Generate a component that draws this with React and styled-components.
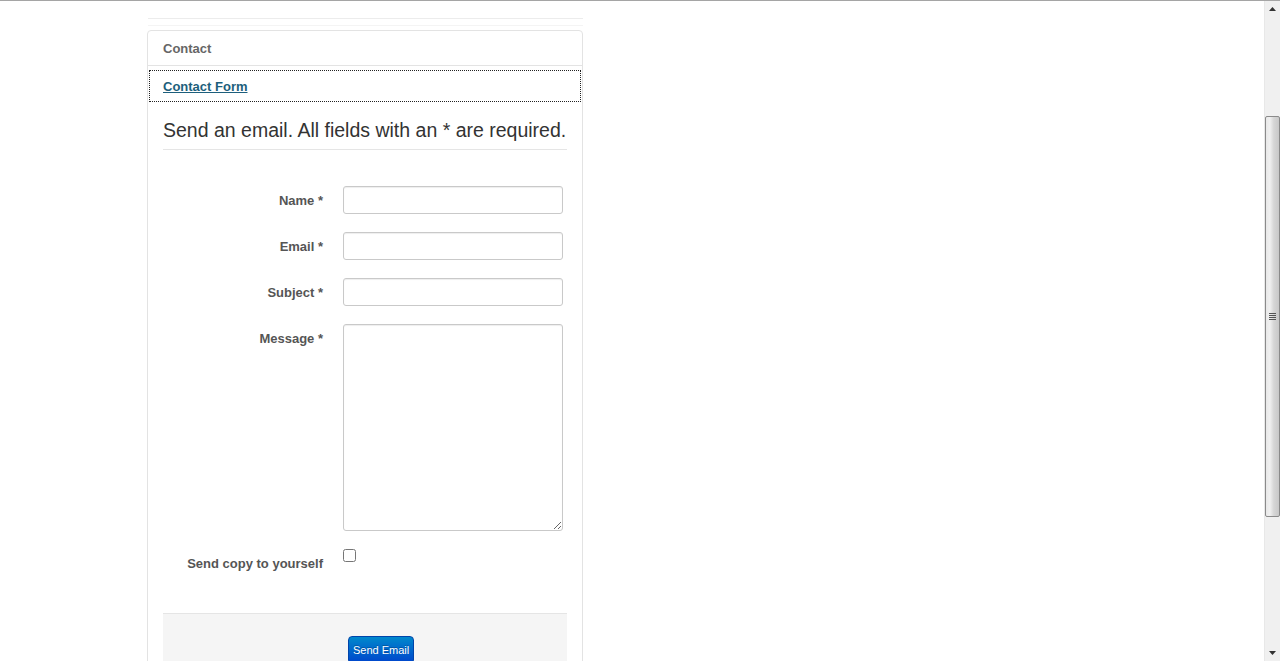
import React from 'react';
import styled, { createGlobalStyle } from 'styled-components';

const GlobalStyle = createGlobalStyle`
  html, body {
    margin: 0;
    padding: 0;
    background: #fff;
    font-family: 'Liberation Sans', Arial, sans-serif;
    overflow: hidden;
  }
`;

const Page = styled.div`
  display: flex;
  width: 1280px;
  height: 661px;
  border-top: 1px solid #a5a5a5;
  box-sizing: border-box;
  overflow: hidden;
`;

const Main = styled.div`
  flex: 1;
  padding-left: 147px;
`;

const Column = styled.div`
  width: 436px;
`;

const Rule = styled.div`
  margin-left: 1px;
  height: 6px;
  margin-top: 17px;
  border-top: 1px solid #ececec;
  border-bottom: 1px solid #f4f4f4;
`;

const Panel = styled.div`
  margin-top: 4px;
  border: 1px solid #e3e3e3;
  border-radius: 4px;
  height: 700px;
  box-sizing: border-box;
`;

const PanelHeader = styled.div`
  height: 34px;
  padding-left: 15px;
  line-height: 36px;
  font-size: 13px;
  font-weight: bold;
  color: #666;
  border-bottom: 1px solid #e3e3e3;
`;

const TabRow = styled.div`
  margin: 4px 1px 0;
  height: 30px;
  padding-left: 13px;
  border: 1px dotted #222;
  display: flex;
  align-items: center;
`;

const TabLink = styled.a`
  font-size: 13px;
  font-weight: bold;
  color: #1d5f7c;
  text-decoration: underline;
`;

const Body = styled.div`
  padding: 0 15px;
`;

const Legend = styled.h2`
  margin: 15px 0 0;
  padding-bottom: 6px;
  font-size: 19.5px;
  font-weight: normal;
  line-height: 26px;
  color: #333;
  border-bottom: 1px solid #e5e5e5;
  white-space: nowrap;
`;

const Fields = styled.div`
  padding-top: 36px;
  display: flex;
  flex-direction: column;
  gap: 18px;
`;

const Row = styled.div`
  display: flex;
  align-items: flex-start;
  gap: 20px;
`;

const Label = styled.label`
  width: 160px;
  text-align: right;
  font-size: 13px;
  font-weight: bold;
  color: #555;
  line-height: 16px;
  padding-top: ${p => p.$top || 7}px;
  white-space: nowrap;
`;

const Input = styled.input`
  width: 220px;
  height: 28px;
  box-sizing: border-box;
  border: 1px solid #c9c9c9;
  border-radius: 3px;
  box-shadow: inset 0 1px 1px rgba(0, 0, 0, 0.07);
  margin: 0;
  padding: 4px 6px;
`;

const TextArea = styled.textarea`
  width: 220px;
  height: 207px;
  box-sizing: border-box;
  border: 1px solid #c9c9c9;
  border-radius: 3px;
  box-shadow: inset 0 1px 1px rgba(0, 0, 0, 0.07);
  margin: 0;
  resize: both;
`;

const Check = styled.input`
  margin: 0;
  width: 13px;
  height: 13px;
`;

const Actions = styled.div`
  margin-top: 41px;
  height: 60px;
  background: #f5f5f5;
  border-top: 1px solid #e5e5e5;
  display: flex;
  justify-content: flex-start;
  padding: 22px 0 0 185px;
  box-sizing: border-box;
`;

const Button = styled.button`
  height: 28px;
  padding: 0 4px;
  font-family: 'Liberation Sans', Arial, sans-serif;
  font-size: 11px;
  color: #fff;
  background: linear-gradient(#0088cc, #0044cc);
  border: 1px solid #0044aa;
  border-radius: 4px;
  text-shadow: 0 -1px 0 rgba(0, 0, 0, 0.25);
`;

const Scrollbar = styled.div`
  width: 16px;
  background: #f0f0f0;
  border-left: 1px solid #e8e8e8;
  box-sizing: border-box;
  display: flex;
  flex-direction: column;
  align-items: center;
`;

const Arrow = styled.div`
  height: 16px;
  display: flex;
  align-items: center;
  justify-content: center;
`;

const Track = styled.div`
  flex: 1;
  width: 100%;
  padding-top: 99px;
  box-sizing: border-box;
`;

const Thumb = styled.div`
  height: 401px;
  border: 1px solid #8a8a8a;
  border-radius: 2px;
  background: linear-gradient(90deg, #e8e8e8 0%, #f0f0f0 30%, #d6d6d6 60%, #c8c8c8 100%);
  box-sizing: border-box;
  display: flex;
  align-items: center;
  justify-content: center;
`;

const Grip = styled.div`
  width: 7px;
  height: 7px;
  background: repeating-linear-gradient(#555 0 1px, transparent 1px 2px);
`;

export default function App() {
  return (
    <>
      <GlobalStyle />
      <Page>
        <Main>
          <Column>
            <Rule />
            <Panel>
              <PanelHeader>Contact</PanelHeader>
              <TabRow>
                <TabLink href="#">Contact Form</TabLink>
              </TabRow>
              <Body>
                <Legend>Send an email. All fields with an * are required.</Legend>
                <Fields>
                  <Row>
                    <Label>Name *</Label>
                    <Input type="text" />
                  </Row>
                  <Row>
                    <Label>Email *</Label>
                    <Input type="text" />
                  </Row>
                  <Row>
                    <Label>Subject *</Label>
                    <Input type="text" />
                  </Row>
                  <Row>
                    <Label>Message *</Label>
                    <TextArea />
                  </Row>
                  <Row>
                    <Label $top={7}>Send copy to yourself</Label>
                    <Check type="checkbox" />
                  </Row>
                </Fields>
                <Actions>
                  <Button>Send Email</Button>
                </Actions>
              </Body>
            </Panel>
          </Column>
        </Main>
        <Scrollbar>
          <Arrow>
            <svg width="7" height="4" viewBox="0 0 7 4"><path d="M0 4 L3.5 0 L7 4 Z" fill="#333" /></svg>
          </Arrow>
          <Track>
            <Thumb><Grip /></Thumb>
          </Track>
          <Arrow>
            <svg width="7" height="4" viewBox="0 0 7 4"><path d="M0 0 L3.5 4 L7 0 Z" fill="#333" /></svg>
          </Arrow>
        </Scrollbar>
      </Page>
    </>
  );
}
